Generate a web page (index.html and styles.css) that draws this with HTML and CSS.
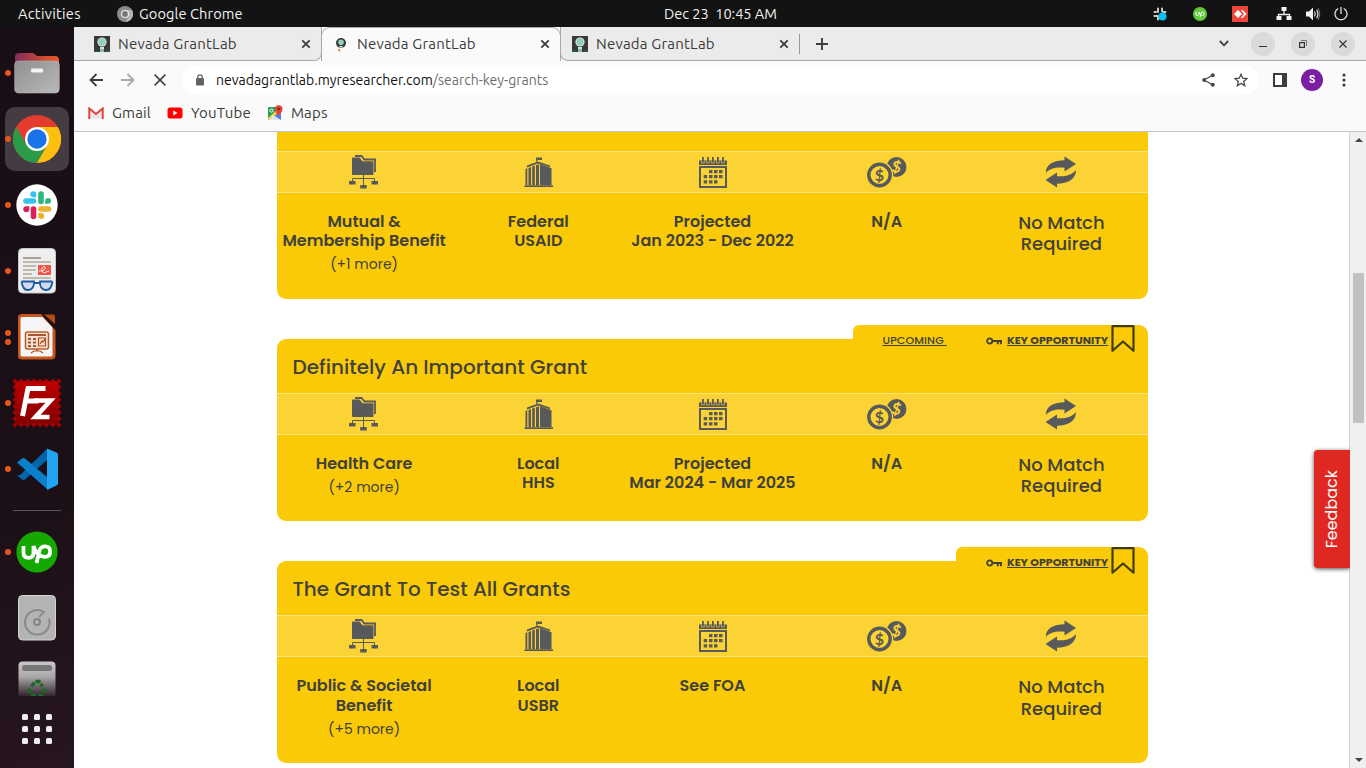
FILE: index.html
```html
<!DOCTYPE html>
<html lang="en">
<head>
<meta charset="utf-8">
<title>Nevada GrantLab</title>
<link rel="stylesheet" href="styles.css">
</head>
<body>
<svg class="defs" width="0" height="0">
  <symbol id="favicon" viewBox="0 0 16 16"><path fill="#39393b" d="M0 0h16v16H0z"/><circle cx="8" cy="6" r="4.6" fill="#e3ece8"/><circle cx="8" cy="6" r="3.7" fill="#93cdbb"/><path fill="#c7e6dc" d="M6 11h4v2H6z"/><path fill="#8fb8aa" d="M6 13h4v3H6z"/><path fill="#1c6163" d="M1 14.5h3V16H1zM12 14.5h3V16h-3z"/></symbol>
  <symbol id="close" viewBox="0 0 10 10"><path d="M1.3 1.3l7.4 7.4M8.7 1.3L1.3 8.7" stroke="#3c3c3c" stroke-width="1.8"/></symbol>
  <symbol id="folder" viewBox="0 0 30 34"><path d="M6 1h6.500l3 3.500H26V17" fill="none" stroke="#58595b" stroke-width="1.800"/><path d="M3 3.500q0-1 1-1h6.500l3 3.800H23.500q1 0 1 1V19q0 1-1 1H4q-1 0-1-1z" fill="#58595b"/><path d="M14.500 20v10M3.500 27v-3.500h22V27" fill="none" stroke="#58595b"/><path d="M0 26h6.500v3.500H0zM11.200 30h6.500v3.500h-6.500zM22.500 26H29v3.500h-6.500z" fill="#58595b"/></symbol>
  <symbol id="building" viewBox="0 0 30 31"><g fill="#58595b"><path d="M12 .5h6v2.500h-4.500v1.500H12zM3 8.500l11-4 12 4v1.800L14 6.500 3 10.500zM1.500 12l1.800-.8V28H1.500zM4.500 11l2.500-1v18H4.500zM8.200 9.600l2.600-1V28H8.200zM12 8.200l3-1V28h-3zM16 7.300l11.500 3.900V28H16zM.5 28.300H29V30H.5z"/></g></symbol>
  <symbol id="calendar" viewBox="0 0 28 31"><path fill="#58595b" d="M0 3.500h28V8H0zM3 0h1.800v5H3zM8 0h1.800v5H8zM13 0h1.800v5H13zM18 0h1.800v5H18zM23 0h1.800v5H23z"/><path d="M2.500 4v2H5.300V4M7.500 4v2h2.800V4M12.500 4v2h2.800V4M17.500 4v2h2.800V4M22.500 4v2h2.800V4" fill="none" stroke="#fcd334" stroke-width=".6"/><path d="M1 10h26v20H1z" fill="none" stroke="#58595b" stroke-width="2"/><path fill="#58595b" d="M10 13h3.500v3.200H10zM15 13h3.500v3.200H15zM20 13h3.500v3.200H20zM4.700 18h3.500v3.200H4.700zM10 18h3.500v3.200H10zM15 18h3.500v3.200H15zM20 18h3.500v3.200H20zM4.700 23.200h3.500v3.200H4.700zM10 23.200h3.500v3.200H10zM15 23.200h3.500v3.200H15z"/></symbol>
  <symbol id="coins" viewBox="0 0 40 31"><circle cx="29.500" cy="10" r="10" fill="#58595b"/><text x="29.500" y="15.500" class="dollar" fill="#fcd334" transform="rotate(12 29.500 10)">$</text><circle cx="12.500" cy="18" r="13.700" fill="#fcd334"/><circle cx="12.500" cy="18" r="10.700" fill="none" stroke="#58595b" stroke-width="3.400"/><text x="12.500" y="23.500" class="dollar" fill="#58595b">$</text></symbol>
  <symbol id="swap" viewBox="0 0 32 32"><path fill="#58595b" d="M19.500.5L31 8l-11.500 7.500v-3.700C12 11 5 12 .8 17 .8 8 9 4.300 19.500 4.300zM12 31.500L.5 24 12 16.500v3.700C20 21 27 19 31 14c0 9-8 13.700-19 13.700z"/></symbol>
  <symbol id="key" viewBox="0 0 17 10"><circle cx="3.700" cy="5" r="2.600" fill="none" stroke="#40413c" stroke-width="1.800"/><path d="M6.500 5H16M11.800 5v3.200M14.900 5v3.200" stroke="#40413c" stroke-width="1.900" fill="none"/></symbol>
  <symbol id="bookmark" viewBox="0 0 24 28"><path d="M1.500 1.200h21v24.600L12 16.500 1.500 25.800z" fill="none" stroke="#403d08" stroke-width="2.200" stroke-linejoin="round"/></symbol>
</svg>

<header class="topbar">
  <span class="activities">Activities</span>
  <svg class="app-icon" width="16" height="16" viewBox="0 0 16 16"><circle cx="8" cy="8" r="8" fill="#8c8c8c"/><path d="M8 4h7a8 8 0 0 1-6.500 12l3-6z" fill="#b5b5b5"/><circle cx="8" cy="8" r="4" fill="#eee"/><circle cx="8" cy="8" r="2.900" fill="#777"/></svg>
  <span class="app-name">Google Chrome</span>
  <span class="clock">Dec 23&nbsp; 10:45 AM</span>
  <div class="tray">
    <svg class="tray-slack" width="14" height="14" viewBox="0 0 14 14"><path d="M5 1.500V5M1.500 5H3M9 1.500V4M10 5h2.500M1.500 9H5M5 10.500v2M9 9v3" stroke="#ccc" stroke-width="2" stroke-linecap="round"/><circle cx="9.500" cy="9.500" r="4" fill="#00c3f0"/></svg>
    <svg class="tray-up" width="14" height="14" viewBox="0 0 14 14"><circle cx="7" cy="7" r="7" fill="#63c93c"/><path d="M3 5v2q0 1.500 1.400 1.500T6 7V5q1 3 2.500 3.500M7 10.500l1-4q.4-1.500 1.600-1.500 1.500 0 1.500 1.700T9.500 8.500" stroke="#fff" fill="none"/></svg>
    <svg class="tray-desk" width="16" height="16" viewBox="0 0 16 16"><path fill="#ef443b" d="M0 0h16v16H0z"/><path fill="#fff" d="M6 4l4 4-4 4-4-4zM9 4.500l1.300-.8L14.500 8l-4.200 4.300L9 11.500 12 8z"/></svg>
    <svg class="tray-net" width="16" height="14" viewBox="0 0 16 14"><path d="M8 3v4M2.500 11V7.500h11V11" stroke="#eee" stroke-width="1.300" fill="none"/><path fill="#f2f2f2" d="M5.500 0h5v4h-5zM.5 9h5v4h-5zM10.500 9h5v4h-5z"/></svg>
    <svg class="tray-vol" width="16" height="14" viewBox="0 0 16 14"><path fill="#f2f2f2" d="M1 4.500h3L8 .5v13l-4-4H1z"/><path d="M9.500 4.500q1.500 2.500 0 5M11.700 2.800q2.500 4.200 0 8.400" stroke="#eee" fill="none" stroke-width="1.200"/><path d="M13 1q3.500 6 0 12" stroke="#777" fill="none"/></svg>
    <svg class="tray-power" width="14" height="14" viewBox="0 0 14 14"><path d="M4.300 1.500A6 6 0 1 0 9.700 1.500M7 0v7" stroke="#eee" stroke-width="1.200" fill="none"/></svg>
  </div>
</header>

<div class="desktop">
<nav class="dock">
  <div class="slot running"><svg width="46" height="42" viewBox="0 0 46 42"><defs><linearGradient id="fg" x2="1"><stop stop-color="#812d58"/><stop offset="1" stop-color="#ee5a21"/></linearGradient><linearGradient id="gg" x1="0" y1="0" x2="1" y2="1"><stop stop-color="#8f8f8f"/><stop offset="1" stop-color="#b9b9b9"/></linearGradient></defs><path d="M1 5q0-4 4-4h14l4 3h18q4 0 4 4v10H1z" fill="url(#fg)"/><rect x=".7" y="9" width="44.600" height="32" rx="4" fill="url(#gg)" stroke="#b5b5b5" stroke-width=".6"/><rect x="17" y="16.500" width="12" height="4" rx="1" fill="#f4f4f4"/></svg></div>
  <div class="slot running active"><svg width="48" height="48" viewBox="0 0 48 48"><circle cx="24" cy="24" r="24" fill="#e33b2e"/><path d="M3.200 12A24 24 0 0 0 24 48l10.400-18H13.600z" fill="#2c9b48"/><path d="M44.800 12A24 24 0 0 1 24 48l10.400-18L24 12z" fill="#fdc00f"/><circle cx="24" cy="24" r="12" fill="#fff"/><circle cx="24" cy="24" r="9.700" fill="#1a73e8"/></svg></div>
  <div class="slot running"><svg width="42" height="42" viewBox="0 0 42 42"><circle cx="21" cy="21" r="20.700" fill="#fff"/><g stroke-width="5.600" stroke-linecap="round" fill="none"><path stroke="#36c5f0" d="M10 17h7.500"/><path stroke="#2eb67d" d="M25 10v7.500"/><path stroke="#ecb22e" d="M25 25h7.500"/><path stroke="#e01e5a" d="M17.500 25v7.500"/></g><path fill="#36c5f0" d="M20.300 13.300h-3a3 3 0 1 1 3-3z"/><path fill="#2eb67d" d="M29.200 19.800v-3a2.900 2.900 0 1 1 3 3z"/><path fill="#ecb22e" d="M22.200 29h3a3 3 0 1 1-3 3z"/><path fill="#e01e5a" d="M13.300 22.200v3a3 3 0 1 1-3-3z"/></svg></div>
  <div class="slot running"><svg width="38" height="46" viewBox="0 0 38 46"><rect x=".5" y=".5" width="37" height="44.500" rx="4" fill="#eee" stroke="#c8c8c8"/><path d="M5 10h18" stroke="#aaa391" stroke-width="2"/><path d="M5 14h28M5 18h13M5 22h13M5 26h9M5 30h28" stroke="#bfbaad" stroke-width="1.800"/><path fill="#f1554a" d="M20 17h13v10H20z"/><path d="M21 23c5 0 7-2 6-4s-4 1-3 4 4 1 7 0" stroke="#fff" fill="none"/><path d="M3.500 33.500H16q.5 8-6 8.500-5 .5-6.500-8.500M34.500 33.500H22q-.5 8 6 8.500 5 .5 6.500-8.500M16 35h6" stroke="#1d5ba8" stroke-width="1.800" fill="#d0dcec"/></svg></div>
  <div class="slot running twice"><svg width="38" height="46" viewBox="0 0 38 46"><path d="M4 1.500h21L36 13v28q0 3-3 3H4q-3 0-3-3V4.500q0-3 3-3z" fill="#f5f5f5" stroke="#c8551c" stroke-width="3"/><path d="M23 0l15 17V0z" fill="#1d1118"/><path d="M26 .5h9q2 0 2 2V10z" fill="#b64a13"/><rect x="7.500" y="18" width="23" height="17" rx="2" fill="#f6e2d4" stroke="#b75d2c" stroke-width="1.500"/><path d="M10 21h18M10 25h3M10 28.500h3M10 32h3M15 25h3M15 28.500h3M15 32h3" stroke="#a9562b" stroke-width="2"/><path d="M20.500 24h7v8h-7zM22 30l2-3 1 1 2-3M19 35v2M13 39l3-2h6l3 2" stroke="#b24a13" stroke-width="1.200" fill="none"/></svg></div>
  <div class="slot running"><svg width="48" height="48" viewBox="0 0 48 48"><defs><linearGradient id="fz" x2="0" y2="1"><stop stop-color="#c00000"/><stop offset="1" stop-color="#820000"/></linearGradient></defs><rect x="2" y="2" width="44" height="44" fill="url(#fz)"/><rect x="2" y="2" width="44" height="44" fill="none" stroke="#a80000" stroke-width="4" stroke-linecap="round" stroke-dasharray="0 6.286"/><path d="M9.500 37L15 9.500h17.500M12.500 22h13" stroke="#fff" stroke-width="5" fill="none"/><path d="M21 21.500h16.500L22.500 38h14" stroke="#fff" stroke-width="4.600" fill="none"/></svg></div>
  <div class="slot running"><svg width="42" height="42" viewBox="0 0 42 42"><path d="M4 27l27-26v11L9 31.500q-1.500 1.300-3 0l-5-4z" fill="#0065a9"/><path d="M1 14.500l5-4q1.500-1.200 3 0L31 29v12z" fill="#0a80cb"/><path d="M31 .5l9.500 4q1.500.8 1.500 2v29q0 1.500-1.500 2L31 42V.5z" fill="#24a4f0"/></svg></div>
  <div class="divider"></div>
  <div class="slot running"><svg width="42" height="42" viewBox="0 0 42 42"><circle cx="21" cy="21" r="20.600" fill="#14a800"/><path d="M7.500 15v6.500q0 5.300 5 5.300t5-5.300V15q2.500 8 8 10.500M20.500 32l3-12.500q1.200-4.200 5.500-4.200 5.200 0 5.200 5.200t-5.400 5.300q-2.200 0-4.300-1.600" stroke="#fff" stroke-width="3.800" fill="none"/></svg></div>
  <div class="slot"><svg width="38" height="46" viewBox="0 0 38 46"><rect x=".5" y=".5" width="37" height="44.500" rx="4" fill="#b4b4b4" stroke="#d4d4d4"/><path d="M31 23.500a12.300 12.300 0 1 1-5-6.500l-5 5" stroke="#8a8a8a" stroke-width="2" fill="none"/><circle cx="19" cy="27" r="3" fill="none" stroke="#858585" stroke-width="2"/></svg></div>
  <div class="slot trash"><svg width="38" height="46" viewBox="0 0 38 46"><defs><linearGradient id="tr" x2="0" y2="1"><stop stop-color="#c8c8c8"/><stop offset=".3" stop-color="#aaa"/><stop offset=".72" stop-color="#2b1a25"/></linearGradient></defs><rect x=".5" y=".5" width="37" height="50" rx="4" fill="url(#tr)"/><rect x="4" y="4" width="30" height="6" rx="2.500" fill="#777"/><path d="M13.500 25.500l3.500-5h4l3.500 5M10.500 27.500l4 7h4M27.500 27.500l-4 7h-4" stroke="#1c6a2a" stroke-width="3.500" stroke-dasharray="5 1.500" fill="none"/></svg></div>
  <div class="slot"><div class="apps"><i></i><i></i><i></i><i></i><i></i><i></i><i></i><i></i><i></i></div></div>
</nav>

<main class="browser">
  <div class="tabs">
    <div class="tab first"><svg width="16" height="16"><use href="#favicon"/></svg><span>Nevada GrantLab</span><svg class="x" width="10" height="10"><use href="#close"/></svg></div>
    <div class="tab current"><svg width="16" height="16" viewBox="0 0 16 16"><circle cx="8" cy="7" r="5" fill="#39393b"/><circle cx="8" cy="6.300" r="2.800" fill="#93cdbb"/><path fill="#d9e6e1" d="M6.500 10h3v1.500h-3z"/><path fill="#ef8120" d="M5 13h2v1.500H5zM6 14.500h1V16H6z"/></svg><span>Nevada GrantLab</span><svg class="x" width="10" height="10"><use href="#close"/></svg></div>
    <div class="tab last"><svg width="16" height="16"><use href="#favicon"/></svg><span>Nevada GrantLab</span><svg class="x" width="10" height="10"><use href="#close"/></svg></div>
    <div class="tabs-rest">
      <i class="tab-sep"></i>
      <svg class="plus" width="12" height="12" viewBox="0 0 12 12"><path d="M6 0v12M0 6h12" stroke="#3c3c3c" stroke-width="1.900"/></svg>
      <svg class="chevron" width="10" height="7" viewBox="0 0 10 7"><path d="M.8 1L5 5.300 9.200 1" fill="none" stroke="#3c3c3c" stroke-width="1.800"/></svg>
      <b class="win"><svg width="8" height="8" viewBox="0 0 8 8"><path d="M0 6.500h8" stroke="#333"/></svg></b>
      <b class="win"><svg width="8" height="8" viewBox="0 0 8 8"><path d="M2 .5h5.500V6" fill="none" stroke="#777"/><path d="M.6 2.600h4.800v4.800H.6z" fill="none" stroke="#333" stroke-width="1.200"/></svg></b>
      <b class="win"><svg width="8" height="8" viewBox="0 0 8 8"><path d="M.5.5l7 7M7.500.5l-7 7" stroke="#333" stroke-width="1.200"/></svg></b>
    </div>
  </div>

  <div class="toolbar">
    <svg width="14" height="14" viewBox="0 0 14 14"><path d="M14 7H1.500M7.500 1l-6 6 6 6" fill="none" stroke="#3c3c3c" stroke-width="1.800"/></svg>
    <svg width="14" height="14" viewBox="0 0 14 14"><path d="M0 7h12.500M6.500 1l6 6-6 6" fill="none" stroke="#a9a9a9" stroke-width="1.800"/></svg>
    <svg class="stop" width="12" height="12" viewBox="0 0 12 12"><path d="M.6.6l10.800 10.800M11.400.6L.6 11.400" stroke="#3c3c3c" stroke-width="1.500"/></svg>
    <div class="omnibox">
      <svg width="8" height="12" viewBox="0 0 8 12"><path d="M1.800 5V3a2.200 2.200 0 0 1 4.400 0v2" fill="none" stroke="#5f6368" stroke-width="1.300"/><rect y="4" width="8" height="7.500" rx="1" fill="#5f6368"/></svg>
      <span class="url"><span class="host">nevadagrantlab.myresearcher.com</span><span class="path">/search-key-grants</span></span>
      <svg class="share" width="13" height="14" viewBox="0 0 13 14"><path d="M11 2L2 7l9 5" fill="none" stroke="#4a4a4a" stroke-width="1.300"/><circle cx="10.800" cy="2.200" r="2" fill="#4a4a4a"/><circle cx="2.200" cy="7" r="2" fill="#4a4a4a"/><circle cx="10.800" cy="11.800" r="2" fill="#4a4a4a"/></svg>
      <svg width="14" height="14" viewBox="0 0 14 14"><path d="M7 1.300l1.700 3.900 4.200.4-3.200 2.800 1 4.200L7 10.400l-3.700 2.200 1-4.200L1.100 5.600l4.200-.4z" fill="none" stroke="#4a4a4a" stroke-width="1.300"/></svg>
    </div>
    <svg class="panel" width="14" height="14" viewBox="0 0 14 14"><path d="M1 1h12v12H1z" fill="#fff" stroke="#3c3c3c" stroke-width="2"/><path d="M9 0h5v14H9z" fill="#3c3c3c"/></svg>
    <span class="avatar">S</span>
    <svg class="menu" width="4" height="14" viewBox="0 0 4 14"><g fill="#3c3c3c"><circle cx="2" cy="2" r="1.600"/><circle cx="2" cy="7" r="1.600"/><circle cx="2" cy="12" r="1.600"/></g></svg>
  </div>

  <div class="bookmarks">
    <svg width="16" height="12" viewBox="0 0 16 12"><path d="M3 4v7.500h10V4L8 8.300z" fill="#e6e6e6"/><path d="M1.300 12V1.500L8 7l6.700-5.500V12" fill="none" stroke="#dc4338" stroke-width="2"/></svg><span class="gmail">Gmail</span>
    <svg width="16" height="12" viewBox="0 0 16 12"><rect x=".5" y=".5" width="15" height="11" rx="2.500" fill="#f00"/><path d="M6.300 3.500v5L10.500 6z" fill="#fff"/></svg><span class="youtube">YouTube</span>
    <svg width="16" height="16" viewBox="0 0 16 16"><rect x="1" y="2" width="13" height="13" rx="1" fill="#2a9d57"/><path d="M3 15L14 5v9q0 1-1 1z" fill="#4b83ea"/><path d="M1 13L12 3l2 1.500L3.500 15H2q-1 0-1-1z" fill="#f6cf47"/><path d="M6 10l8 5H2z" fill="#dfe6ec"/><path d="M11.500 12c0-3-3.500-4-3.500-8a3.500 3.500 0 0 1 7.500 0c0 4-4 5-4 8z" fill="#e04434"/><circle cx="11.700" cy="4" r="1.300" fill="#7b231c"/><circle cx="4.500" cy="5.500" r="1.600" fill="none" stroke="#fff"/></svg><span class="maps">Maps</span>
  </div>

  <div class="viewport">
    <div class="page">
      <article class="card cut">
        <div class="band"><svg width="30" height="34"><use href="#folder"/></svg><svg class="civic" width="30" height="31"><use href="#building"/></svg><svg class="dates" width="28" height="31"><use href="#calendar"/></svg><svg class="money" width="40" height="31"><use href="#coins"/></svg><svg class="swap" width="32" height="32"><use href="#swap"/></svg></div>
        <div class="facts">
          <div>Mutual &amp;<br>Membership Benefit<small>(+1 more)</small></div><div>Federal<br>USAID</div><div>Projected<br>Jan 2023 - Dec 2022</div><div>N/A</div><div class="match">No Match<br>Required</div>
        </div>
      </article>
      <article class="card">
        <div class="flag wide"><span class="upcoming">UPCOMING&nbsp;</span><svg width="17" height="10"><use href="#key"/></svg><span class="opportunity">KEY OPPORTUNITY</span><svg class="mark" width="24" height="28"><use href="#bookmark"/></svg></div>
        <h2>Definitely An Important Grant</h2>
        <div class="band"><svg width="30" height="34"><use href="#folder"/></svg><svg class="civic" width="30" height="31"><use href="#building"/></svg><svg class="dates" width="28" height="31"><use href="#calendar"/></svg><svg class="money" width="40" height="31"><use href="#coins"/></svg><svg class="swap" width="32" height="32"><use href="#swap"/></svg></div>
        <div class="facts short">
          <div>Health Care<small>(+2 more)</small></div><div>Local<br>HHS</div><div>Projected<br>Mar 2024 - Mar 2025</div><div>N/A</div><div class="match">No Match<br>Required</div>
        </div>
      </article>
      <article class="card">
        <div class="flag"><svg width="17" height="10"><use href="#key"/></svg><span class="opportunity">KEY OPPORTUNITY</span><svg class="mark" width="24" height="28"><use href="#bookmark"/></svg></div>
        <h2>The Grant To Test All Grants</h2>
        <div class="band"><svg width="30" height="34"><use href="#folder"/></svg><svg class="civic" width="30" height="31"><use href="#building"/></svg><svg class="dates" width="28" height="31"><use href="#calendar"/></svg><svg class="money" width="40" height="31"><use href="#coins"/></svg><svg class="swap" width="32" height="32"><use href="#swap"/></svg></div>
        <div class="facts loose">
          <div>Public &amp; Societal<br>Benefit<small>(+5 more)</small></div><div>Local<br>USBR</div><div>See FOA</div><div>N/A</div><div class="match">No Match<br>Required</div>
        </div>
      </article>
    </div>
    <div class="scrollbar"><i class="up"></i><i class="thumb"></i><i class="down"></i></div>
    <div class="feedback"><span>Feedback</span></div>
  </div>
</main>
</div>
</body>
</html>
```
FILE: styles.css
```css
* { box-sizing: border-box; }
body { margin: 0; width: 1366px; height: 768px; overflow: hidden; background: #fff; font-family: Ubuntu, "Noto Sans", "Open Sans", sans-serif; }
svg { display: block; flex: none; }
.defs { position: absolute; }

.topbar { height: 27px; background: #131313; color: #f2f2f2; display: flex; align-items: center; font-size: 14.600px; position: relative; white-space: nowrap; }
.activities { margin-left: 18px; width: 99px; letter-spacing: .3px; }
.app-name { margin-left: 6px; letter-spacing: .1px; }
.clock { position: absolute; left: 664px; letter-spacing: -.05px; }
.tray { margin-left: auto; display: flex; align-items: center; padding-right: 18px; }
.tray-up { margin-left: 26px; }
.tray-desk { margin-left: 25px; }
.tray-net { margin-left: 28px; }
.tray-vol { margin-left: 13px; }
.tray-power { margin-left: 13px; }

.desktop { display: flex; height: 741px; }
.dock { width: 74px; flex: none; padding-top: 13px; background: linear-gradient(160deg, #190e15, #1b1017 60%, #27151f); display: flex; flex-direction: column; }
.slot { height: 66px; flex: none; display: flex; align-items: center; justify-content: center; position: relative; }
.active::after { content: ""; position: absolute; inset: 1px 5px; border-radius: 10px; background: #453b42; }
.active svg { position: relative; z-index: 1; }
.running::before { content: ""; position: absolute; z-index: 2; left: 5px; top: 30px; width: 6px; height: 6px; border-radius: 50%; background: #e95420; }
.twice::before { top: 26px; box-shadow: 0 9px #e95420; }
.divider { height: 1px; flex: none; margin: 8px 13px; background: #5c5358; }
.trash { height: 45px; overflow: hidden; align-items: flex-start; padding-top: 10px; }
.apps { display: grid; grid-template-columns: repeat(3, 6px); gap: 6px; }
.apps i { height: 6px; border-radius: 1.5px; background: #eee; }

.browser { flex: 1; min-width: 0; background: #fafafa; }
.tabs { height: 34px; display: flex; background: #fafafa; color: #3c3c3c; font-size: 15px; white-space: nowrap; }
.tab { display: flex; align-items: center; background: #ebebeb; border-bottom: 1px solid #a8a8a8; }
.tab span { margin-left: 8px; flex: 1; letter-spacing: .2px; margin-top: -1px; }
.first { width: 248px; padding: 0 11px 0 20px; border-right: 1px solid #a8a8a8; border-bottom-right-radius: 8px; }
.current { width: 240px; background: #fafafa; border: 1px solid #a8a8a8; border-bottom: 0; border-radius: 9px 9px 0 0; padding: 0 10px 1px 11px; margin-left: -1px; }
.last { width: 239px; padding: 0 10px 0 11px; border-left: 1px solid #a8a8a8; border-bottom-left-radius: 8px; margin-left: -1px; }
.first .x { margin-right: -1px; }
.tabs-rest { flex: 1; display: flex; align-items: center; background: #ebebeb; border-bottom: 1px solid #a8a8a8; padding-right: 11px; }
.tab-sep { width: 1px; height: 20px; background: #999; }
.plus { margin-left: 16px; }
.chevron { margin-left: auto; margin-right: 22px; }
.win { width: 24px; height: 24px; margin-left: 16px; border-radius: 50%; background: #dadada; display: flex; align-items: center; justify-content: center; }
.chevron + .win { margin-left: 0; }

.toolbar { height: 37px; display: flex; align-items: center; padding: 0 20px 0 15px; gap: 18px; }
.stop { margin-left: 1px; }
.omnibox { flex: 1; height: 30px; border-radius: 15px; background: #fff; margin-left: -2px; margin-right: -4px; padding: 0 11px 0 14px; display: flex; align-items: center; }
.url { margin-left: 12px; flex: 1; font-size: 14px; white-space: nowrap; }
.host { color: #111; }
.path { color: #6e6e6e; }
.share { margin-right: 19px; }
.avatar { width: 22px; height: 22px; margin: 0 1px 0 -4px; border-radius: 50%; background: #7b1fa2; color: #fff; font: bold 10px/22px Roboto, sans-serif; text-align: center; }
.bookmarks { height: 34px; border-bottom: 1px solid #c6c6c6; padding: 0 0 4px 14px; display: flex; align-items: center; font-size: 15px; letter-spacing: .15px; color: #3c3c3c; }
.bookmarks span { margin: -1px 16px 0 8px; }

.viewport { height: 636px; background: #fff; position: relative; display: flex; justify-content: space-between; overflow: hidden; }
.page { width: 871px; margin-left: 203px; font-family: Poppins, Inter, sans-serif; color: #40413c; }
.card { position: relative; background: #fbca06; border-radius: 9px 0 9px 9px; margin-bottom: 40px; }
.cut { border-radius: 0 0 9px 9px; padding-top: 19px; }
.card h2 { margin: 0; height: 54px; padding-left: 15.600px; font-size: 20px; line-height: 57px; font-weight: 500; white-space: nowrap; }
.band { height: 42px; background: #fcd334; border-top: 1px solid #fde47c; border-bottom: 1px solid #fde47c; display: grid; grid-template-columns: repeat(5, 1fr); align-items: center; justify-items: center; }
.civic, .dates, .swap { margin-left: 1px; }
.money { margin-top: 1px; }
.dollar { font: bold 16px Lato, sans-serif; text-anchor: middle; }
.facts { height: 106px; padding-top: 19px; display: grid; grid-template-columns: repeat(5, 1fr); text-align: center; font-size: 16px; line-height: 19.200px; font-weight: 600; white-space: nowrap; }
.short { height: 86px; }
.loose { padding-top: 19.400px; }
.facts small { display: block; font-size: 14px; line-height: 21px; padding-top: 4px; font-weight: 400; }
.facts .match { font-size: 18px; line-height: 21.200px; font-weight: 500; padding-left: 1px; }
.loose .match { line-height: 21.600px; }
.flag { position: absolute; right: 0; top: -14px; width: 192px; height: 15px; background: #fbca06; border-radius: 6px 9px 0 0; display: flex; align-items: center; padding: 15px 13px 0 30px; font-size: 11px; line-height: 15px; white-space: nowrap; }
.flag > svg:not(.mark) { margin-top: 1px; }
.wide { width: 295px; }
.upcoming { font-weight: 500; text-decoration: underline; width: 103px; letter-spacing: .12px; margin-left: -.5px; margin-right: .5px; }
.opportunity { font-weight: 700; text-decoration: underline; margin-left: 4px; }
.mark { position: absolute; right: 13px; top: 0; }

.scrollbar { width: 17px; border-left: 1px solid #d4d4d4; background: #f0f0f0; position: relative; }
.thumb { position: absolute; left: 3px; top: 141px; width: 11px; height: 150px; background: #c1c1c1; }
.up, .down { position: absolute; left: 5px; border: 4px solid transparent; }
.up { top: 2px; border-bottom-color: #444; }
.down { bottom: 2px; border-top-color: #444; }
.feedback { position: absolute; left: 1240px; top: 318px; width: 36px; height: 118px; border-radius: 4px 0 0 4px; background: #e02822; box-shadow: 0 1px 4px rgba(0,0,0,.7); color: #fff; display: flex; align-items: center; justify-content: center; padding-right: 2px; clip-path: inset(-8px 0 -8px -8px); }
.feedback span { writing-mode: vertical-rl; transform: rotate(180deg); font: 16px Poppins, Inter, sans-serif; }
```
